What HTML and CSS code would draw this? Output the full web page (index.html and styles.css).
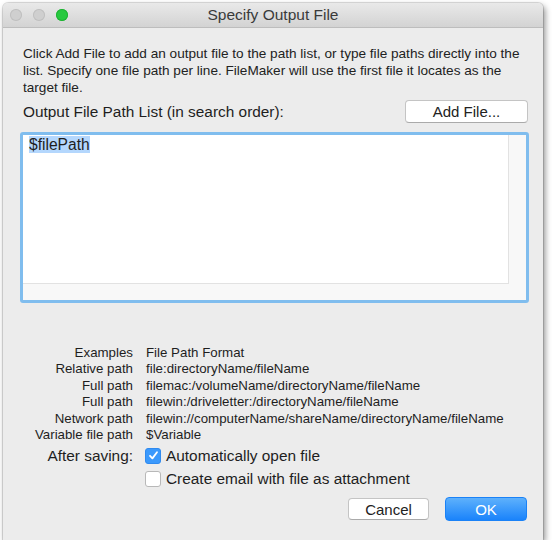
FILE: index.html
```html
<!DOCTYPE html>
<html lang="en">
<head>
    <meta charset="UTF-8">
    <title>Specify Output File</title>
    <link rel="stylesheet" href="styles.css">
</head>
<body>
    <div class="window">
        <div class="titlebar">
            <div class="lights">
                <span class="light"></span>
                <span class="light"></span>
                <span class="light green"></span>
            </div>
            <div class="title">Specify Output File</div>
        </div>
        <div class="content">
            <p class="intro">Click Add File to add an output file to the path list, or type file paths directly into the list. Specify one file path per line. FileMaker will use the first file it locates as the target file.</p>
            <div class="list-head">
                <span class="list-label">Output File Path List (in search order):</span>
                <button class="btn add">Add File...</button>
            </div>
            <div class="pathbox">
                <div class="pathtext"><span class="sel">$filePath</span></div>
                <div class="vscroll"></div>
                <div class="hscroll"></div>
            </div>
            <div class="examples">
                <span class="lbl">Examples</span><span class="val">File Path Format</span>
                <span class="lbl">Relative path</span><span class="val">file:directoryName/fileName</span>
                <span class="lbl">Full path</span><span class="val">filemac:/volumeName/directoryName/fileName</span>
                <span class="lbl">Full path</span><span class="val">filewin:/driveletter:/directoryName/fileName</span>
                <span class="lbl">Network path</span><span class="val">filewin://computerName/shareName/directoryName/fileName</span>
                <span class="lbl">Variable file path</span><span class="val">$Variable</span>
            </div>
            <div class="options">
                <span class="opt-label">After saving:</span>
                <label class="check"><span class="box on"><svg width="11" height="11" viewBox="0 0 11 11"><path d="M2 5.8 L4.4 8.4 L9 2.2" fill="none" stroke="#fff" stroke-width="1.8" stroke-linecap="round" stroke-linejoin="round"/></svg></span>Automatically open file</label>
                <span></span>
                <label class="check"><span class="box"></span>Create email with file as attachment</label>
            </div>
            <div class="actions">
                <button class="btn cancel">Cancel</button>
                <button class="btn ok">OK</button>
            </div>
        </div>
    </div>
</body>
</html>
```

FILE: styles.css
```css
body{
    margin: 0;
    padding: 3px 0 0 3px;
    background: #fff;
    font-family: "Liberation Sans", Arial, sans-serif;
    color: #1e1e1e;
}

.window{
    width: 540px;
    height: 537px;
    background: #ececec;
    border-radius: 5px 5px 0 0;
    box-shadow: 0 0 0 1px rgba(0,0,0,0.12), 2px 3px 6px rgba(0,0,0,0.45);
    overflow: hidden;
    display: flex;
    flex-direction: column;
}

.titlebar{
    height: 24px;
    background: linear-gradient(#e9e9e9, #d3d3d3);
    border-bottom: 1px solid #bdbdbd;
    display: flex;
    align-items: center;
    position: relative;
}

.lights{
    display: flex;
    gap: 11px;
    padding-left: 7px;
}

.light{
    width: 12px;
    height: 12px;
    border-radius: 50%;
    background: #cfcfcf;
    box-shadow: inset 0 0 0 1px #c0c0c0;
}

.light.green{
    background: #27c93f;
    box-shadow: inset 0 0 0 1px #1fb234;
}

.title{
    position: absolute;
    left: 0;
    right: 0;
    text-align: center;
    font-size: 15.5px;
    color: #3a3a3a;
}

.content{
    padding: 17px 17px 0 20px;
    flex: 1;
    display: flex;
    flex-direction: column;
}

.intro{
    margin: 0;
    font-size: 13.6px;
    line-height: 17px;
    color: #222;
}

.list-head{
    display: flex;
    justify-content: space-between;
    align-items: center;
    margin-top: 4px;
}

.list-label{
    font-size: 15.4px;
}

.btn{
    font-family: inherit;
    font-size: 15px;
    color: #222;
    background: #fff;
    border: 1px solid #c4c4c4;
    border-bottom-color: #aaa;
    border-radius: 4px;
    height: 23px;
    padding: 0;
}

.add{
    width: 123px;
    margin-right: -2px;
}

.pathbox{
    margin-top: 9px;
    margin-left: -3px;
    width: 503px;
    height: 165px;
    border: 3px solid #80bdee;
    border-radius: 3px;
    background: #f8f8f8;
    display: grid;
    grid-template-columns: 1fr 17px;
    grid-template-rows: 1fr 16px;
}

.pathtext{
    background: #fff;
    border-right: 1px solid #e2e2e2;
    border-bottom: 1px solid #e2e2e2;
    padding: 1px 0 0 6px;
    font-size: 15.6px;
    line-height: 18px;
}

.sel{
    background: #b4d7fd;
}

.examples{
    margin-top: 42px;
    display: grid;
    grid-template-columns: 110px auto;
    column-gap: 13px;
    font-size: 13.3px;
    line-height: 16.4px;
}

.lbl{
    text-align: right;
}

.options{
    margin-top: 4px;
    display: grid;
    grid-template-columns: 110px auto;
    column-gap: 12px;
    row-gap: 6px;
    font-size: 15.4px;
    line-height: 17px;
    align-items: center;
}

.opt-label{
    text-align: right;
}

.check{
    display: flex;
    align-items: center;
    gap: 5px;
}

.box{
    width: 14px;
    height: 14px;
    border: 1px solid #b8b8b8;
    border-radius: 3px;
    background: #fff;
    display: flex;
    align-items: center;
    justify-content: center;
}

.box.on{
    background: #3b99fc;
    border-color: #2f8aef;
}

.actions{
    display: flex;
    justify-content: flex-end;
    align-items: center;
    gap: 16px;
    margin-top: 10px;
    margin-right: -1px;
}

.cancel{
    width: 81px;
    height: 22px;
}

.ok{
    width: 82px;
    height: 24px;
    color: #fff;
    border: 1px solid #1a82f7;
    background: linear-gradient(#5eb1fc, #1a83fb);
}
```
